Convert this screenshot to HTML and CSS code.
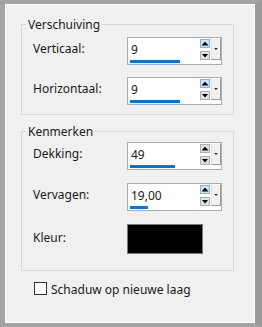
FILE: index.html
```html
<!DOCTYPE html>
<html>
<head>
	<meta charset="UTF-8" />
	<title>Slagschaduw</title>
	<meta name="viewport" content="width=device-width, initial-scale=1.0"/>

	<link rel="stylesheet" href="styles.css">
</head>
<body>
	<div class="dialog">
		<div class="panel">
			<!-- Verschuiving -->
			<fieldset class="group group-offset">
				<legend>Verschuiving</legend>
				<div class="row">
					<span class="label">Verticaal:</span>
					<div class="spin">
						<div class="spin-field">
							<span class="spin-value">9</span>
							<span class="spin-track"><span class="spin-bar" style="width: 50px;"></span></span>
						</div>
						<div class="spin-arrows">
							<span class="spin-up hover"></span>
							<span class="spin-down"></span>
						</div>
						<span class="spin-drop"></span>
					</div>
				</div>
				<div class="row">
					<span class="label">Horizontaal:</span>
					<div class="spin">
						<div class="spin-field">
							<span class="spin-value">9</span>
							<span class="spin-track"><span class="spin-bar" style="width: 50px;"></span></span>
						</div>
						<div class="spin-arrows">
							<span class="spin-up hover"></span>
							<span class="spin-down"></span>
						</div>
						<span class="spin-drop"></span>
					</div>
				</div>
			</fieldset>
			<!-- Kenmerken -->
			<fieldset class="group group-look">
				<legend>Kenmerken</legend>
				<div class="row">
					<span class="label">Dekking:</span>
					<div class="spin">
						<div class="spin-field">
							<span class="spin-value">49</span>
							<span class="spin-track"><span class="spin-bar" style="width: 45px;"></span></span>
						</div>
						<div class="spin-arrows">
							<span class="spin-up"></span>
							<span class="spin-down"></span>
						</div>
						<span class="spin-drop"></span>
					</div>
				</div>
				<div class="row">
					<span class="label">Vervagen:</span>
					<div class="spin">
						<div class="spin-field">
							<span class="spin-value">19,00</span>
							<span class="spin-track"><span class="spin-bar" style="width: 18px;"></span></span>
						</div>
						<div class="spin-arrows">
							<span class="spin-up hover"></span>
							<span class="spin-down"></span>
						</div>
						<span class="spin-drop"></span>
					</div>
				</div>
				<div class="row">
					<span class="label label-swatch">Kleur:</span>
					<span class="swatch"></span>
				</div>
			</fieldset>
			<!-- Footer -->
			<label class="check-row">
				<input class="check" type="checkbox" />
				<span class="check-text">Schaduw op nieuwe laag</span>
			</label>
		</div>
	</div>
</body>
</html>
```

FILE: styles.css
```css
	body{
		margin: 0;
		font-family: "Noto Sans", "Liberation Sans", sans-serif;
		font-size: 12px;
		line-height: 17px;
		color: #1a1a1a;
		background: #f0f0f0;
	}

	.dialog{
		width: 262px;
		height: 327px;
		box-sizing: border-box;
		border-style: solid;
		border-color: #a3a3a3 #9a9a9a #a3a3a3 #a3a3a3;
		border-width: 4px 7px 4px 5px;
	}

	.panel{
		height: 100%;
		box-sizing: border-box;
		border: 1px solid #ffffff;
		background: #f0f0f0;
		overflow: hidden;
	}

	/* group boxes */
	.group{
		width: 213px;
		box-sizing: border-box;
		min-width: 0;
		margin: 0 0 0 15px;
		border: 1px solid #d9d9d9;
	}

	.group legend{
		padding: 0 2px;
		line-height: 17px;
	}

	.group-offset{
		margin-top: 11px;
		padding: 4px 0 9px 4px;
	}

	.group-look{
		margin-top: 8px;
		padding: 2px 0 16px 4px;
	}

	.row{
		display: flex;
		align-items: flex-start;
		padding-left: 7px;
	}

	.group-offset .row + .row{
		margin-top: 12px;
	}

	.group-look .row + .row{
		margin-top: 13px;
	}

	.label{
		width: 94px;
		padding-top: 3px;
	}

	.label-swatch{
		padding-top: 5px;
	}

	/* spin box */
	.spin{
		display: flex;
		width: 95px;
		height: 28px;
		box-sizing: border-box;
		border: 1px solid #acacac;
		background: #ffffff;
	}

	.spin-field{
		width: 72px;
		display: flex;
		flex-direction: column;
	}

	.spin-value{
		padding: 3px 0 0 3px;
	}

	.spin-track{
		display: block;
		margin-top: auto;
		margin-bottom: 1px;
		padding-left: 2px;
	}

	.spin-bar{
		display: block;
		height: 3px;
		background: #0b74d1;
	}

	.spin-arrows{
		width: 10px;
		display: flex;
		flex-direction: column;
		gap: 3px;
		padding-top: 1px;
	}

	.spin-up,
	.spin-down{
		display: flex;
		align-items: center;
		justify-content: center;
		height: 9px;
		box-sizing: border-box;
		border: 1px solid #adadad;
		background: #e1e1e1;
	}

	.spin-up.hover{
		border-color: #7eb4ea;
		background: #cde5f7;
	}

	.spin-up::after,
	.spin-down::after{
		content: "";
		width: 7px;
		height: 4px;
		background: #000000;
	}

	.spin-up::after{
		clip-path: polygon(50% 0, 100% 100%, 0 100%);
	}

	.spin-down::after{
		clip-path: polygon(0 0, 100% 0, 50% 100%);
	}

	.spin-drop{
		display: flex;
		align-items: center;
		justify-content: center;
		width: 10px;
		height: 22px;
		margin-left: 1px;
		box-sizing: border-box;
		border-style: solid;
		border-width: 1px;
		border-color: #ffffff #9c9c9c #9c9c9c #e3e3e3;
		background: #f0f0f0;
	}

	.spin-drop::after{
		content: "";
		border-left: 2px solid transparent;
		border-right: 2px solid transparent;
		border-top: 2px solid #333333;
	}

	.swatch{
		width: 76px;
		height: 30px;
		box-sizing: border-box;
		border: 1px solid #7a7a7a;
		background: #000000;
	}

	/* checkbox */
	.check-row{
		display: flex;
		align-items: flex-start;
		margin: 10px 0 0 28px;
	}

	.check{
		appearance: none;
		width: 13px;
		height: 13px;
		margin: 1px 4px 0 0;
		box-sizing: border-box;
		border: 1px solid #333333;
		background: #ffffff;
	}
```
